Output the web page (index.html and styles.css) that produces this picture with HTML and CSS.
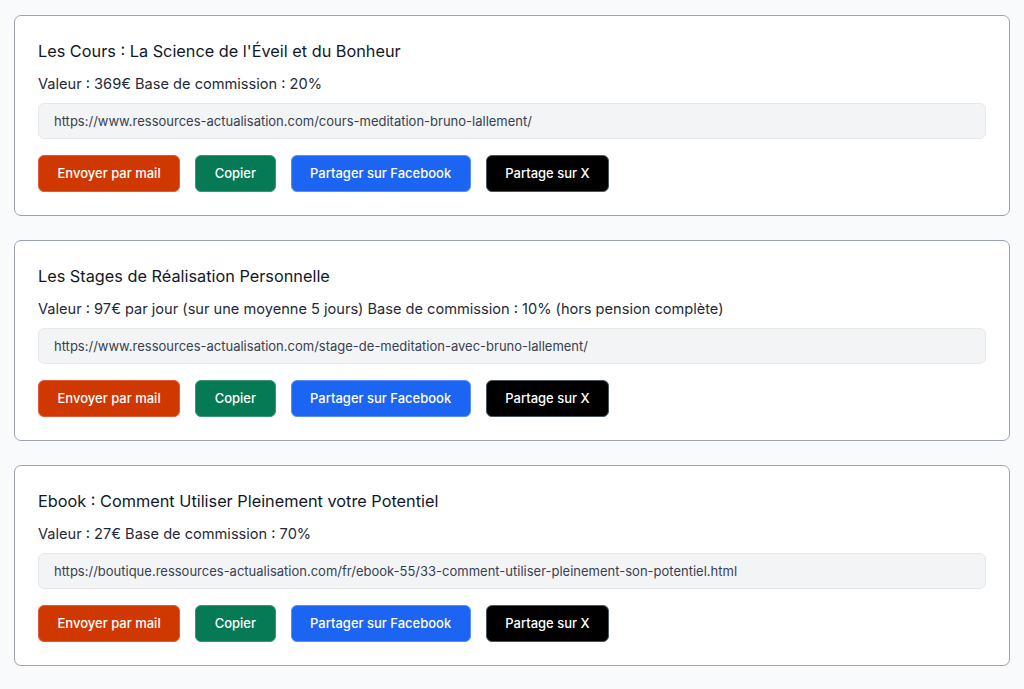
FILE: index.html
```html
<!DOCTYPE html>
<html lang="fr">
<head>
<meta charset="utf-8">
<title>Affiliation</title>
<link rel="stylesheet" href="styles.css">
</head>
<body>
<main class="list">
  <section class="card">
    <h2 class="title">Les Cours : La Science de l'Éveil et du Bonheur</h2>
    <p class="value">Valeur : 369€ Base de commission : 20%</p>
    <input class="url" type="text" readonly value="https://www.ressources-actualisation.com/cours-meditation-bruno-lallement/">
    <div class="actions">
      <button class="btn btn-mail">Envoyer par mail</button>
      <button class="btn btn-copy">Copier</button>
      <button class="btn btn-fb">Partager sur Facebook</button>
      <button class="btn btn-x">Partage sur X</button>
    </div>
  </section>
  <section class="card">
    <h2 class="title">Les Stages de Réalisation Personnelle</h2>
    <p class="value">Valeur : 97€ par jour (sur une moyenne 5 jours) Base de commission : 10% (hors pension complète)</p>
    <input class="url" type="text" readonly value="https://www.ressources-actualisation.com/stage-de-meditation-avec-bruno-lallement/">
    <div class="actions">
      <button class="btn btn-mail">Envoyer par mail</button>
      <button class="btn btn-copy">Copier</button>
      <button class="btn btn-fb">Partager sur Facebook</button>
      <button class="btn btn-x">Partage sur X</button>
    </div>
  </section>
  <section class="card">
    <h2 class="title">Ebook : Comment Utiliser Pleinement votre Potentiel</h2>
    <p class="value">Valeur : 27€ Base de commission : 70%</p>
    <input class="url" type="text" readonly value="https://boutique.ressources-actualisation.com/fr/ebook-55/33-comment-utiliser-pleinement-son-potentiel.html">
    <div class="actions">
      <button class="btn btn-mail">Envoyer par mail</button>
      <button class="btn btn-copy">Copier</button>
      <button class="btn btn-fb">Partager sur Facebook</button>
      <button class="btn btn-x">Partage sur X</button>
    </div>
  </section>
</main>
</body>
</html>
```
FILE: styles.css
```css
* { box-sizing: border-box; }
html, body {
  margin: 0;
  padding: 0;
  background: #f9fafb;
  font-family: Inter, "Liberation Sans", Arial, sans-serif;
  color: #111827;
}
.list {
  display: flex;
  flex-direction: column;
  gap: 24px;
  padding: 15px 14px 0 14px;
}
.card {
  background: #ffffff;
  border: 1px solid #9ca3af;
  border-radius: 7px;
  padding: 23px;
  display: flex;
  flex-direction: column;
}
.title {
  margin: 0;
  font-size: 16.3px;
  font-weight: 400;
  line-height: 24px;
  color: #111827;
}
.value {
  margin: 10px 0 0 0;
  font-size: 14.6px;
  line-height: 22px;
  color: #1f2937;
}
.url {
  margin-top: 8px;
  width: 100%;
  height: 36px;
  background: #f3f4f6;
  border: 1px solid #e5e7eb;
  border-radius: 6px;
  padding: 0 15px;
  font-family: inherit;
  font-size: 13px;
  color: #374151;
  outline: none;
}
.actions {
  margin-top: 16px;
  display: flex;
  gap: 15px;
}
.btn {
  font-family: inherit;
  font-size: 13px;
  font-weight: 500;
  line-height: 17px;
  padding: 9px 18.5px;
  border-radius: 6px;
  border: 1px solid transparent;
  color: #ffffff;
  cursor: pointer;
}
.btn-mail { background: #d03801; border-color: #e5583a; }
.btn-copy { background: #057a55; border-color: #3a9577; }
.btn-fb { background: #1c64f2; border-color: #5a8ff5; }
.btn-x { background: #000000; border-color: #4b5563; }
```
